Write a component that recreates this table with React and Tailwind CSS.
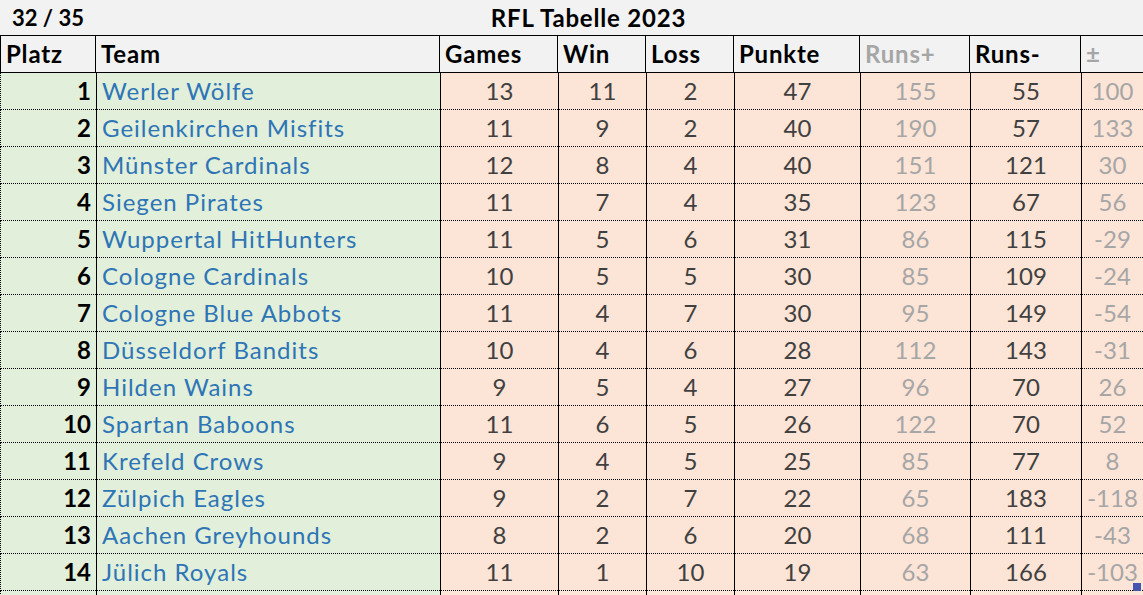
import React from 'react';

const rows = [
  [1, 'Werler Wölfe', 13, 11, 2, 47, 155, 55, 100],
  [2, 'Geilenkirchen Misfits', 11, 9, 2, 40, 190, 57, 133],
  [3, 'Münster Cardinals', 12, 8, 4, 40, 151, 121, 30],
  [4, 'Siegen Pirates', 11, 7, 4, 35, 123, 67, 56],
  [5, 'Wuppertal HitHunters', 11, 5, 6, 31, 86, 115, -29],
  [6, 'Cologne Cardinals', 10, 5, 5, 30, 85, 109, -24],
  [7, 'Cologne Blue Abbots', 11, 4, 7, 30, 95, 149, -54],
  [8, 'Düsseldorf Bandits', 10, 4, 6, 28, 112, 143, -31],
  [9, 'Hilden Wains', 9, 5, 4, 27, 96, 70, 26],
  [10, 'Spartan Baboons', 11, 6, 5, 26, 122, 70, 52],
  [11, 'Krefeld Crows', 9, 4, 5, 25, 85, 77, 8],
  [12, 'Zülpich Eagles', 9, 2, 7, 22, 65, 183, -118],
  [13, 'Aachen Greyhounds', 8, 2, 6, 20, 68, 111, -43],
  [14, 'Jülich Royals', 11, 1, 10, 19, 63, 166, -103],
];

const grid = 'grid grid-cols-[96px_344px_118px_88px_88px_126px_110px_111px_62px]';

const Row = ({ pl, team, vals }) => (
  <div className={`${grid} h-[37px] text-[24px] leading-none shrink-0`}>
    <div className="flex items-center justify-end pr-[5px] bg-[#e2efda] border-l border-b border-dotted border-black font-bold text-black">
      {pl}
    </div>
    <div className="bg-[#e2efda] border-l border-solid border-black">
      <div className="h-full flex items-center pl-[5px] border-b border-dotted border-black text-[#2e75b6] tracking-[1px]">
        {team}
      </div>
    </div>
    {vals.map((v, i) => (
      <div key={i} className="bg-[#fce4d6] border-l border-solid border-black">
        <div
          className={`h-full flex items-center justify-center border-b border-dotted border-black ${
            i === 4 || i === 6 ? 'text-[#a6a6a6]' : 'text-[#404040]'
          }`}
        >
          {v}
        </div>
      </div>
    ))}
  </div>
);

const App = () => {
  return (
    <div className="w-[1143px] h-[595px] overflow-hidden bg-[#f2f2f2] font-['Lato','Liberation_Sans',sans-serif] relative flex flex-col">
      {/* title row */}
      <div className={`${grid} h-[35px] items-center shrink-0`}>
        <div className="pl-[12px] text-[22px] font-bold text-black leading-none">32 / 35</div>
        <div className="col-span-7 text-center text-[24px] font-bold text-black leading-none tracking-[0.8px]">
          RFL Tabelle 2023
        </div>
        <div />
      </div>

      {/* header */}
      <div className={`${grid} h-[38px] shrink-0 border-y border-black bg-[#f2f2f2] text-[24px] font-bold leading-none tracking-[0.8px]`}>
        {['Platz', 'Team', 'Games', 'Win', 'Loss', 'Punkte', 'Runs+', 'Runs-', '±'].map((h, i) => (
          <div
            key={h}
            className={`flex items-center pl-[5px] border-black ${i === 8 ? '' : 'border-r'} ${i === 0 ? 'border-l' : ''} ${
              h === 'Runs+' || h === '±' ? 'text-[#a6a6a6]' : 'text-black'
            }`}
          >
            {h}
          </div>
        ))}
      </div>

      {/* data rows */}
      {rows.map(([pl, team, ...vals]) => (
        <Row key={pl} pl={pl} team={team} vals={vals} />
      ))}
      <Row pl="" team="" vals={['', '', '', '', '', '', '']} />

      <div className="absolute left-[1133px] top-[583px] w-[8px] h-[8px] bg-[#4455b0]" />
    </div>
  );
};

export default App;
